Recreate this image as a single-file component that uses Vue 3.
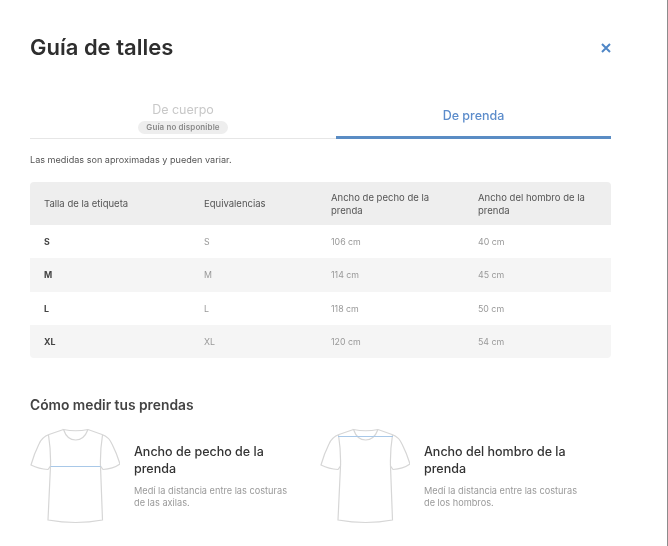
<script setup>
const head = ['Talla de la etiqueta', 'Equivalencias', 'Ancho de pecho de la prenda', 'Ancho del hombro de la prenda']
const rows = [
  ['S', 'S', '106 cm', '40 cm'],
  ['M', 'M', '114 cm', '45 cm'],
  ['L', 'L', '118 cm', '50 cm'],
  ['XL', 'XL', '120 cm', '54 cm'],
]
const guides = [
  { title: 'Ancho de pecho de la prenda', text: 'Medí la distancia entre las costuras de las axilas.', line: 'M25.5 40.5H75.5' },
  { title: 'Ancho del hombro de la prenda', text: 'Medí la distancia entre las costuras de los hombros.', line: 'M23 10.5H78' },
]
</script>

<template>
  <div class="page">
    <div class="modal">
      <header class="top">
        <h1>Guía de talles</h1>
        <svg class="close" width="10" height="10" viewBox="0 0 10 10" aria-label="Cerrar">
          <path d="M1 1L9 9M9 1L1 9" />
        </svg>
      </header>

      <div class="tabs">
        <div class="tab off">
          <span class="tab-name">De cuerpo</span>
          <span class="pill">Guía no disponible</span>
        </div>
        <div class="tab on">De prenda</div>
      </div>

      <p class="note">Las medidas son aproximadas y pueden variar.</p>

      <div class="table">
        <div class="row head">
          <div v-for="h in head" :key="h" class="cell">{{ h }}</div>
        </div>
        <div v-for="r in rows" :key="r[0]" class="row body">
          <div v-for="(c, i) in r" :key="i" class="cell" :class="{ strong: i === 0 }">{{ c }}</div>
        </div>
      </div>

      <h2>Cómo medir tus prendas</h2>

      <div class="guides">
        <div v-for="g in guides" :key="g.title" class="guide">
          <svg class="shirt" width="90" height="100" viewBox="5 0 90 100">
            <path class="outline" d="M38.5 3.5L24 8.5Q17 11 14 18Q9 28 6 39Q14 43 23 43.5L25.5 40L23 94Q51 99 77.5 94L75.5 40L78 43.5Q88 43 95 38Q92 28 87 18Q84 11 77 8.5L63 3.5Q50.7 6 38.5 3.5Q42 14 50.7 14Q59 14 63 3.5M23.5 9Q26 25 25.5 40M77.5 9Q75 25 75.5 40" />
            <path class="measure" :d="g.line" />
          </svg>
          <div class="guide-text">
            <h3>{{ g.title }}</h3>
            <p>{{ g.text }}</p>
          </div>
        </div>
      </div>
    </div>
  </div>
</template>

<style>
html, body { margin: 0; background: #fff; }
</style>

<style scoped>
.page {
  width: 667px;
  height: 546px;
  border-right: 1px solid #8c8c8c;
  overflow: hidden;
  font-family: Inter, "Liberation Sans", sans-serif;
  color: #333;
}
.modal {
  width: 581px;
  margin-left: 30px;
  padding-top: 33px;
  filter: blur(0.5px);
}
.top {
  display: flex;
  justify-content: space-between;
  align-items: center;
  height: 27px;
}
.close {
  margin-top: 2px;
}
h1 {
  margin: 0;
  font-size: 22px;
  font-weight: 600;
  color: #2e2e2e;
}
.close path {
  stroke: #4f86c6;
  stroke-width: 2;
  fill: none;
}
.tabs {
  display: flex;
  margin-top: 42px;
  height: 36px;
  border-bottom: 1px solid #e6e6e6;
}
.tab {
  display: flex;
  flex-direction: column;
  align-items: center;
}
.off {
  width: 306px;
}
.tab-name {
  font-size: 12.5px;
  line-height: 16px;
  color: #c8c8c8;
}
.pill {
  margin-top: 3px;
  padding: 0 8px;
  font-size: 8px;
  font-weight: 600;
  line-height: 13px;
  letter-spacing: 0.1px;
  border-radius: 7px;
  background: #eee;
  color: #8a8a8a;
}
.on {
  flex: 1;
  justify-content: center;
  font-size: 12.5px;
  font-weight: 500;
  color: #5c8ccb;
  border-bottom: 3px solid #5a8cc4;
  margin-bottom: -1px;
  padding-bottom: 8px;
  box-sizing: border-box;
}
.note {
  margin: 15px 0 0;
  font-size: 9.1px;
  line-height: 12px;
  color: #555;
}
.table {
  margin-top: 16px;
  border-radius: 4px;
  overflow: hidden;
}
.row {
  display: grid;
  grid-template-columns: 160px 127px 147px 147px;
  align-items: center;
}
.head {
  height: 43px;
  background: #eee;
}
.body {
  height: 33.25px;
}
.body:nth-child(odd) {
  background: #f5f5f5;
}
.cell {
  padding: 0 20px 0 14px;
  font-size: 8.8px;
  line-height: 13px;
  color: #999;
}
.head .cell {
  color: #555;
  font-size: 9.5px;
}
.cell.strong {
  color: #444;
  font-weight: 700;
}
h2 {
  margin: 38px 0 0;
  font-size: 13.8px;
  line-height: 18px;
  font-weight: 600;
  color: #444;
}
.guides {
  display: flex;
  margin-top: 12px;
}
.guide {
  display: flex;
  align-items: flex-start;
  width: 290px;
  gap: 14px;
}
.shirt {
  flex: none;
}
.outline {
  fill: none;
  stroke: #d6d6d6;
  stroke-width: 1.2;
}
.measure {
  fill: none;
  stroke: #a8c8e8;
  stroke-width: 1.2;
}
.guide-text {
  width: 160px;
  padding-top: 17px;
}
h3 {
  margin: 0;
  font-size: 12.5px;
  line-height: 17px;
  font-weight: 500;
  color: #333;
}
.guide-text p {
  margin: 8px 0 0;
  font-size: 9.2px;
  line-height: 12px;
  color: #999;
}
</style>
